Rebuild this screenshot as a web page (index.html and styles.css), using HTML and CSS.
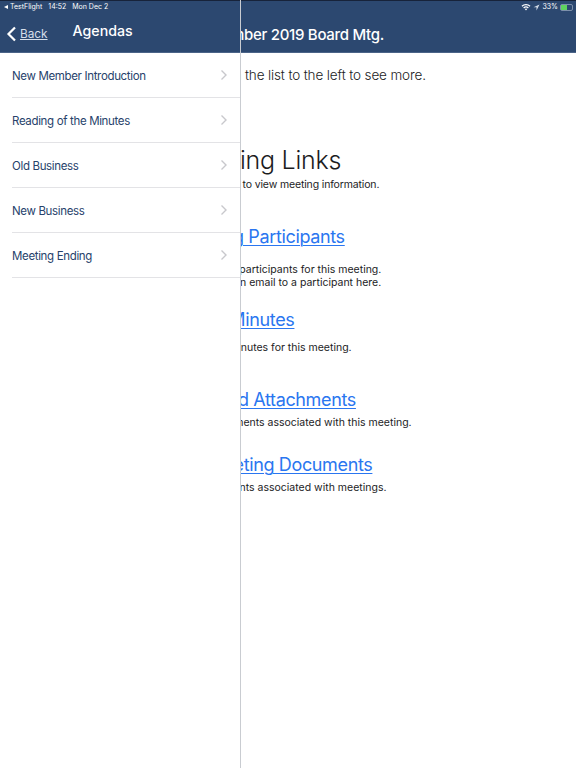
FILE: index.html
```html
<!DOCTYPE html>
<html lang="en">
<head>
  <meta charset="UTF-8">
  <meta name="viewport" content="width=device-width, initial-scale=1.0">
  <title>Agendas</title>
  <link rel="stylesheet" href="styles.css">
</head>
<body>
  <div class="screen">
    <header class="topbar">
      <div class="status-bar">
        <div class="status-right">
          <svg class="wifi-icon" width="10" height="8" viewBox="0 0 10 8"><path d="M0.5 2.8a6.4 6.4 0 0 1 9 0L8.6 3.7a5.1 5.1 0 0 0-7.2 0zM2.2 4.5a4 4 0 0 1 5.6 0L6.9 5.4a2.7 2.7 0 0 0-3.8 0zM3.8 6.1a1.7 1.7 0 0 1 2.4 0L5 7.4z" fill="#fff"/></svg>
          <svg class="arrow-icon" width="7" height="7" viewBox="0 0 7 7"><path d="M6.5 0.5L0.5 3.3H3.5V6.5z" fill="#d5dde8"/></svg>
          <span>33%</span>
          <span class="battery"><span class="battery-fill"></span></span>
        </div>
      </div>
      <div class="meeting-title">November 2019 Board Mtg.</div>
    </header>

    <main class="content">
      <p class="intro">Select from the list to the left to see more.</p>
      <h1>Meeting Links</h1>
      <p class="note">Select a link below to view meeting information.</p>

      <section class="link-block participants">
        <a href="#">Meeting Participants</a>
        <p class="first">View a list of participants for this meeting.</p>
        <p class="second">You can send an email to a participant here.</p>
      </section>
      <section class="link-block minutes">
        <a href="#">Meeting Minutes</a>
        <p>View the minutes for this meeting.</p>
      </section>
      <section class="link-block attachments">
        <a href="#">Board Attachments</a>
        <p>View documents associated with this meeting.</p>
      </section>
      <section class="link-block documents">
        <a href="#">Other Meeting Documents</a>
        <p>View documents associated with meetings.</p>
      </section>
    </main>

    <aside class="sidebar">
      <div class="sidebar-head">
        <div class="status-left">
          <span class="back-tri"></span>
          <span>TestFlight</span>
          <span class="status-time">14:52</span>
          <span class="status-date">Mon Dec 2</span>
        </div>
        <div class="sidebar-nav">
          <a class="back-link" href="#">
            <svg width="11" height="16" viewBox="0 0 11 16"><path d="M9 1.5L2.5 8L9 14.5" fill="none" stroke="#fff" stroke-width="2.2"/></svg>
            <span>Back</span>
          </a>
          <span class="sidebar-title">Agendas</span>
        </div>
      </div>
      <ul class="agenda-list">
        <li>New Member Introduction<svg width="8" height="12" viewBox="0 0 8 12"><path d="M1.5 1.5L6 6L1.5 10.5" fill="none" stroke="#c8c8cc" stroke-width="1.4"/></svg></li>
        <li>Reading of the Minutes<svg width="8" height="12" viewBox="0 0 8 12"><path d="M1.5 1.5L6 6L1.5 10.5" fill="none" stroke="#c8c8cc" stroke-width="1.4"/></svg></li>
        <li>Old Business<svg width="8" height="12" viewBox="0 0 8 12"><path d="M1.5 1.5L6 6L1.5 10.5" fill="none" stroke="#c8c8cc" stroke-width="1.4"/></svg></li>
        <li>New Business<svg width="8" height="12" viewBox="0 0 8 12"><path d="M1.5 1.5L6 6L1.5 10.5" fill="none" stroke="#c8c8cc" stroke-width="1.4"/></svg></li>
        <li>Meeting Ending<svg width="8" height="12" viewBox="0 0 8 12"><path d="M1.5 1.5L6 6L1.5 10.5" fill="none" stroke="#c8c8cc" stroke-width="1.4"/></svg></li>
      </ul>
    </aside>
  </div>
</body>
</html>
```
FILE: styles.css
```css
html, body {
  margin: 0;
  padding: 0;
}
body {
  font-family: Inter, "Liberation Sans", sans-serif;
  background: #fff;
  color: #1c1c1e;
}
.screen {
  position: relative;
  width: 576px;
  height: 768px;
  overflow: hidden;
}
.topbar {
  height: 53px;
  box-sizing: border-box;
  background: #2c4870;
  border-top: 1px solid #17233a;
  border-bottom: 1px solid #4b6488;
  color: #fff;
}
.status-bar {
  display: flex;
  justify-content: flex-end;
  height: 10px;
  padding: 1px 3px 0 0;
  font-size: 7px;
  line-height: 10px;
}
.status-right {
  display: flex;
  align-items: center;
  gap: 2px;
}
.battery {
  display: inline-block;
  width: 11px;
  height: 5px;
  border: 1px solid #7d90ab;
  border-radius: 2px;
}
.battery-fill {
  display: block;
  width: 6px;
  height: 5px;
  background: #5fd35f;
}
.meeting-title {
  margin-top: 13px;
  padding-left: 195px;
  font-size: 15px;
  font-weight: 500;
  line-height: 20px;
  letter-spacing: -0.02em;
}
.content p {
  margin: 0;
}
.intro {
  padding: 12px 0 0 171px;
  font-size: 13.5px;
  line-height: 20px;
  font-weight: 300;
  letter-spacing: -0.01em;
}
h1 {
  margin: 57px 0 0;
  padding-left: 182px;
  font-size: 25px;
  font-weight: 300;
  line-height: 36px;
  letter-spacing: -0.01em;
}
.note {
  padding-left: 150px;
  font-size: 10.5px;
  line-height: 14px;
  letter-spacing: -0.014em;
}
.link-block a {
  display: block;
  font-size: 18px;
  line-height: 26px;
  letter-spacing: -0.02em;
  color: #2a76f0;
  text-decoration: underline;
  text-decoration-thickness: 1px;
  text-underline-offset: 2px;
}
.link-block p {
  font-size: 10.5px;
  line-height: 12.5px;
}
.participants {
  margin-top: 32px;
}
.participants a {
  margin: 0 0 14px 177px;
}
.participants .first {
  padding-left: 173px;
}
.participants .second {
  padding-left: 164px;
}
.minutes {
  margin-top: 18px;
}
.minutes a {
  margin: 0 0 9px 158px;
}
.minutes p {
  padding-left: 183px;
}
.attachments {
  margin-top: 32px;
}
.attachments a {
  margin: 0 0 4px 200px;
}
.attachments p {
  padding-left: 182px;
}
.documents {
  margin-top: 23px;
}
.documents a {
  margin: 0 0 4px 157px;
}
.documents p {
  padding-left: 172px;
}
.sidebar {
  position: absolute;
  top: 0;
  left: 0;
  bottom: 0;
  width: 240px;
  background: #fff;
  border-right: 1px solid #c9ccd1;
}
.sidebar-head {
  height: 53px;
  box-sizing: border-box;
  background: #2c4870;
  border-top: 1px solid #17233a;
  border-bottom: 1px solid #4b6488;
  color: #fff;
}
.status-left {
  display: flex;
  align-items: center;
  gap: 6px;
  height: 10px;
  padding: 1px 0 0 4px;
  font-size: 7px;
  line-height: 10px;
}
.back-tri {
  width: 0;
  height: 0;
  margin-right: -4px;
  border: 2px solid transparent;
  border-right: 4px solid #fff;
  border-left: 0;
}
.sidebar-nav {
  display: flex;
  align-items: center;
  padding: 10px 0 0 6px;
}
.back-link {
  display: flex;
  align-items: center;
  gap: 3px;
  margin-top: 4px;
  color: #d6deea;
  font-size: 11.8px;
  text-decoration: underline;
}
.sidebar-title {
  margin: -4px 0 0 25px;
  font-size: 14.2px;
  font-weight: 500;
}
.agenda-list {
  margin: 0;
  padding: 0 0 0 12px;
  list-style: none;
}
.agenda-list li {
  display: flex;
  align-items: center;
  justify-content: space-between;
  height: 45px;
  box-sizing: border-box;
  padding: 2px 12px 0 0;
  border-bottom: 1px solid #e3e3e6;
  color: #27426b;
  font-size: 11.5px;
  letter-spacing: -0.03em;
}
.agenda-list svg {
  margin-top: -3px;
}
```
